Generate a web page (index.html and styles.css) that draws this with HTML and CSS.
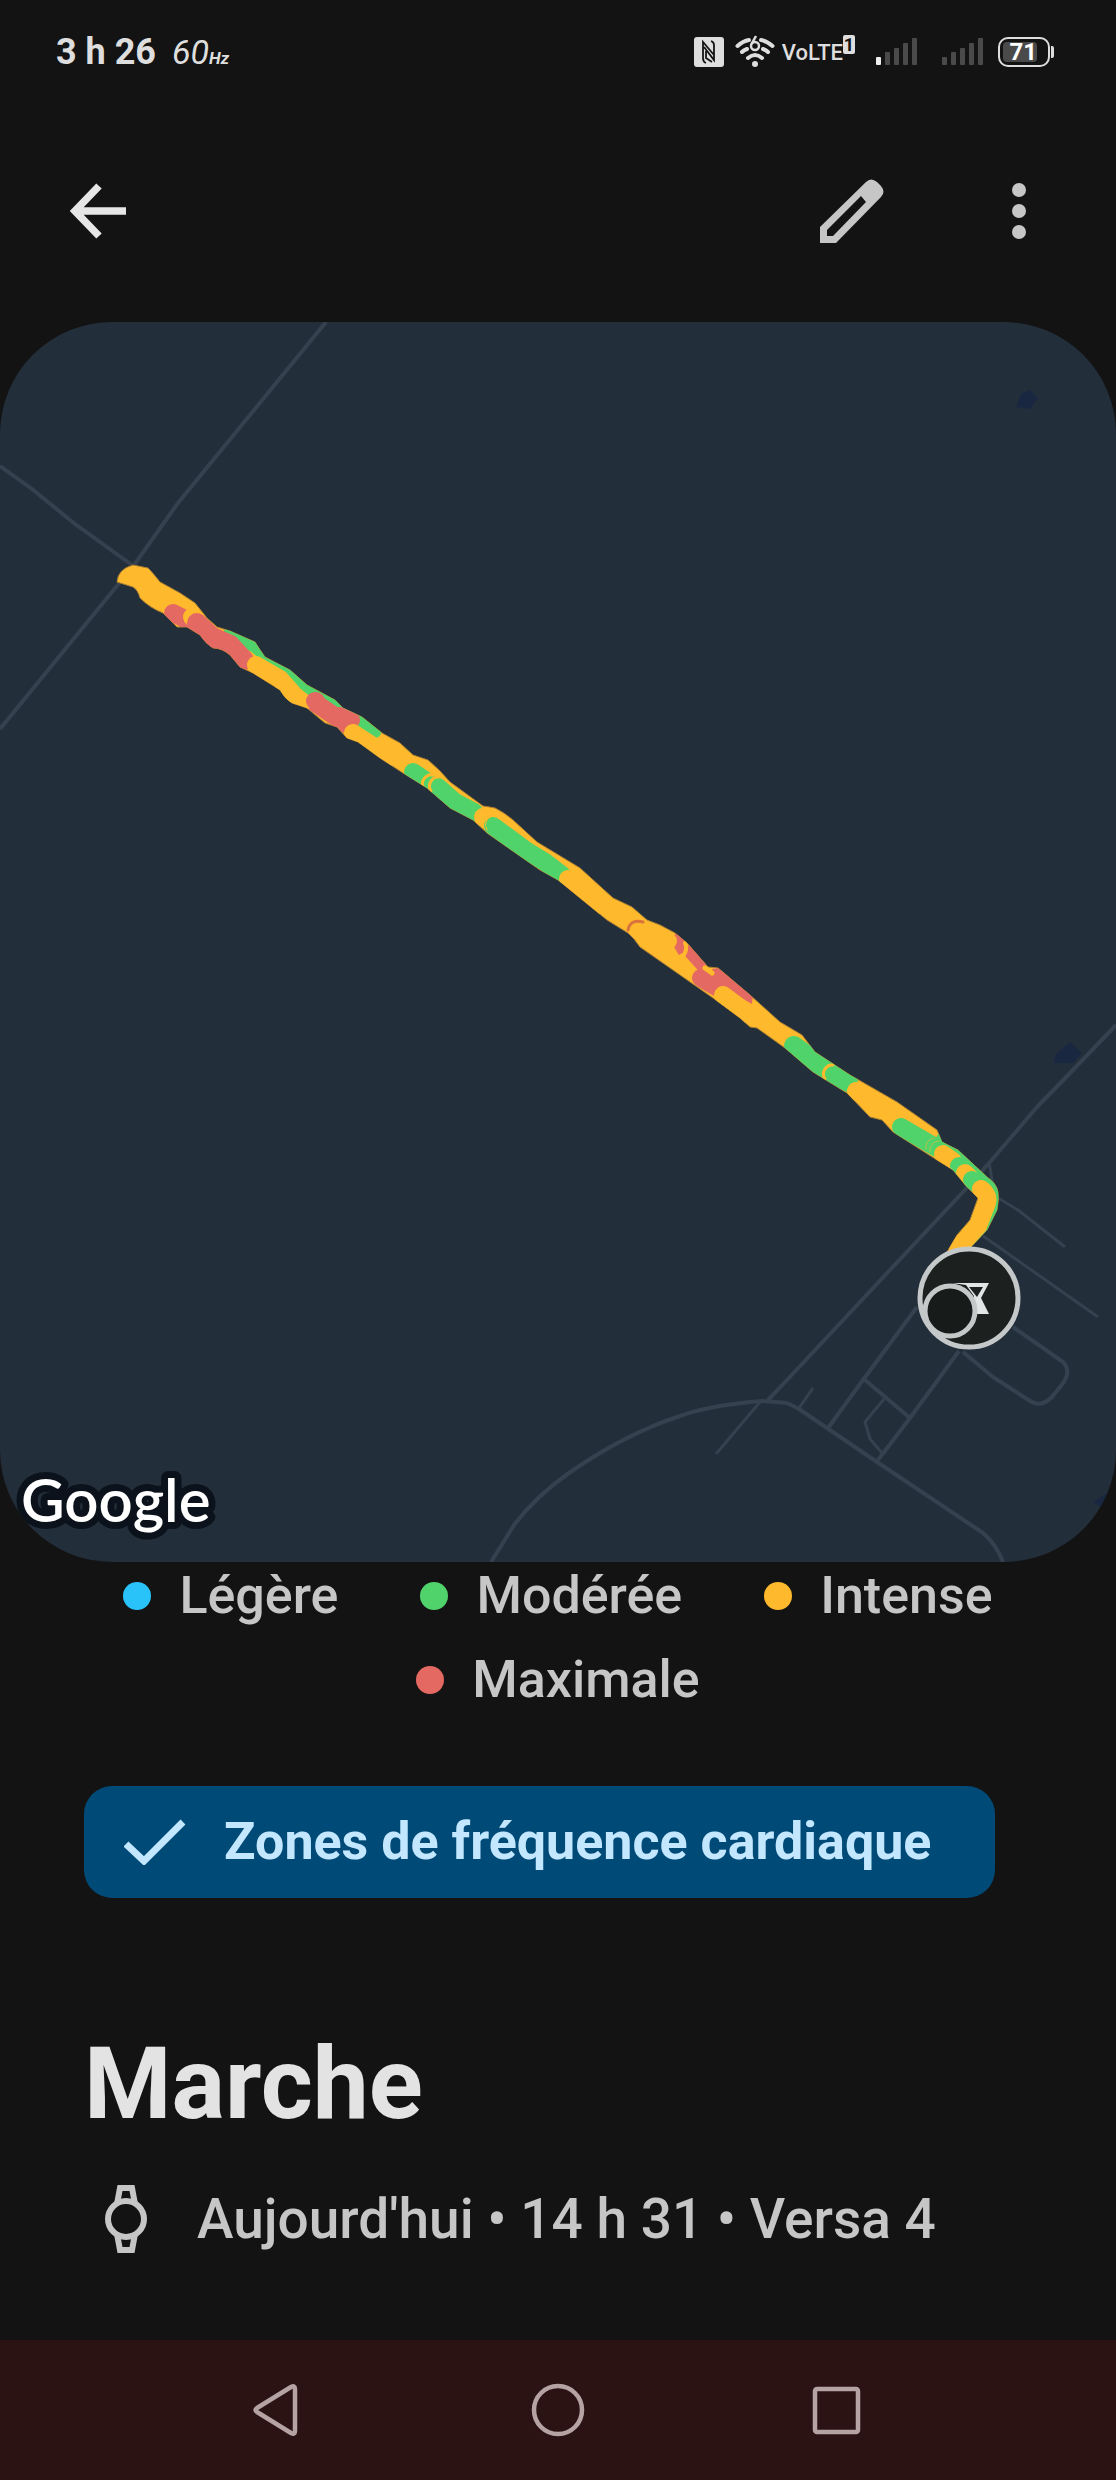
FILE: index.html
```html
<!DOCTYPE html>
<html lang="fr">
<head>
<meta charset="utf-8">
<meta name="viewport" content="width=device-width, initial-scale=1">
<title>Marche</title>
<link rel="stylesheet" href="styles.css">
</head>
<body>
<div class="statusbar">
  <div class="status-left">
    <span class="clock">3 h 26</span>
    <span class="refresh">60<b class="unit">Hz</b></span>
  </div>
  <div class="status-right">
    <svg class="nfc" width="30" height="30" viewBox="0 0 30 30" role="img" aria-label="NFC">
      <rect x="0" y="0" width="30" height="30" rx="3" fill="#dedede"/>
      <path d="M12 26Q9 25 9 21V5L20 18M10 10 20 23V8Q20 5 17 4M12 14V21L18 25" fill="none" stroke="#131313" stroke-width="1.800"/>
    </svg>
    <svg class="wifi" width="40" height="34" viewBox="0 0 40 34" role="img" aria-label="Wi-Fi 6">
      <g fill="none" stroke="#dedede" stroke-width="4" stroke-linecap="round">
        <path d="M2.500 11Q8 6 14 5M26 5Q32 6 37.500 11"/>
        <path d="M7 17Q9 15 12 14M28 14Q31 15 33 17"/>
        <path d="M13 23Q20 17 27 23"/>
      </g>
      <circle cx="20" cy="29" r="3" fill="#dedede"/>
      <circle cx="20" cy="11" r="4" fill="none" stroke="#dedede" stroke-width="2.500"/>
      <path d="M16.500 9 21 1" stroke="#dedede" stroke-width="2.500"/>
    </svg>
    <span class="volte">VoLTE</span><span class="sim">1</span>
    <svg class="signal first" width="42" height="28" viewBox="0 0 42 28" role="img" aria-label="Signal SIM 1">
      <rect x="0" y="19" width="5" height="8" rx="1" fill="#eee"/>
      <g fill="#4a4a4a"><rect x="9" y="14" width="5" height="13" rx="1"/><rect x="18" y="10" width="5" height="17" rx="1"/><rect x="27" y="5" width="5" height="22" rx="1"/><rect x="36" y="0" width="5" height="27" rx="1"/></g>
    </svg>
    <svg class="signal" width="42" height="28" viewBox="0 0 42 28" role="img" aria-label="Signal SIM 2">
      <g fill="#4a4a4a"><rect x="0" y="19" width="5" height="8" rx="1"/><rect x="9" y="14" width="5" height="13" rx="1"/><rect x="18" y="10" width="5" height="17" rx="1"/><rect x="27" y="5" width="5" height="22" rx="1"/><rect x="36" y="0" width="5" height="27" rx="1"/></g>
    </svg>
    <span class="battery"><span class="level">71</span></span>
  </div>
</div>

<header class="appbar">
  <button class="icon-btn" type="button" aria-label="Retour">
    <svg width="56" height="56" viewBox="0 0 56 56"><path d="M56 28H6M29 3 5 28l24 25" fill="none" stroke="#e6e6e6" stroke-width="7.500"/></svg>
  </button>
  <div class="actions">
    <button class="icon-btn" type="button" aria-label="Modifier">
      <svg width="64" height="64" viewBox="0 0 64 64"><path fill="#c6c6c6" fill-rule="evenodd" d="M0 64V48L46 3Q51-2 57 3L61 7Q66 13 61 18L16 64ZM7 57H13L46 23 41 17 7 51Z"/></svg>
    </button>
    <button class="icon-btn" type="button" aria-label="Plus d'options">
      <svg width="14" height="56" viewBox="0 0 14 56"><g fill="#c6c6c6"><circle cx="7" cy="7" r="7"/><circle cx="7" cy="28" r="7"/><circle cx="7" cy="49" r="7"/></g></svg>
    </button>
  </div>
</header>

<main>
  <svg class="map" viewBox="0 322 1116 1240" role="img" aria-label="Carte du parcours">
    <defs>
      <clipPath id="track"><path id="trackShape" d="M133 565 148 568Q153 573 160 582L180 593 195 603 207 618 217 627 230 631 255 642Q260 650 265 657L290 670 307 685 335 700 343 708 362 717 382 733 400 743 413 755 428 760Q440 770 450 782L483 806Q490 807 495 808 505 813 513 820L537 842 580 868 613 898 632 907 647 920 660 925 675 933 687 943 708 967 718 968 750 995 780 1022 802 1035 815 1052 850 1075 897 1102 937 1130 942 1142 958 1150 987 1177Q997 1184 998 1192 999 1201 997 1210L987 1230 970 1248 965 1260 942 1260 950 1247 957 1235 970 1220 978 1198 967 1187 953 1170 937 1160 893 1132 882 1120 870 1117 847 1093 813 1072 785 1048 757 1028 750 1027 740 1018 713 998 640 947 634 939 628 933 607 920 558 880 540 870 507 847 487 833 473 820 450 808 427 788 403 773 380 758 358 742 347 738 337 727 325 723 307 708 292 703Q285 699 280 690L253 673 240 667 230 655Q222 648 213 648 206 644 200 635L187 627H177L163 613Q150 608 140 598 138 590 133 587L117 582Q118 569 133 565Z"/></clipPath>
    </defs>
    <rect y="322" width="1116" height="1240" fill="#232e3b"/>
    <g fill="#1a2740">
      <path d="M1016 407 1021 394 1030 390 1038 398 1030 409Z"/>
      <path d="M1054 1063 1055 1055 1070 1042 1082 1053 1073 1063Z"/>
      <path d="M1093 1502 1112 1490 1108 1512Z"/>
    </g>
    <g fill="none" stroke="#36414f" stroke-width="4" stroke-linejoin="round">
      <path d="M326 322 178 503 134 565 0 729M0 466 32 489 75 524 132 565"/>
      <path d="M1116 1025 1073 1070 1037 1107 990 1162 963 1192 787 1380 768 1400"/>
      <path d="M989 1162 992 1180 998 1198 1018 1210 1065 1247M983 1236 1098 1317" stroke-width="3"/>
      <path d="M1013 1327 1063 1362Q1071 1370 1064 1382L1052 1397Q1041 1408 1030 1401L993 1377 963 1352"/>
      <path d="M917 1307 863 1380 828 1428M959 1351 910 1418 878 1460M865 1380 910 1418"/>
      <path d="M884 1399 865 1422 870 1439 882 1453M813 1388 799 1408M716 1454 760 1402" stroke-width="3"/>
      <path d="M491 1562 514 1525Q536 1496 569 1473 625 1434 680 1416 710 1405 763 1401L787 1403 799 1409 877 1462 983 1533Q996 1544 1003 1562"/>
    </g>
    <use href="#trackShape" fill="#ffb92c" stroke="#a97f33" stroke-width="1"/>
    <g clip-path="url(#track)" fill="none" stroke-width="18" stroke-linecap="round" stroke-linejoin="round">
      <path d="M230 635 255 645 290 675 330 703 350 715 374 731" stroke="#51d36b" stroke-width="15"/>
      <path d="M945 1140 985 1175 998 1195 994 1220 972 1250" stroke="#51d36b"/>
      <g stroke="#e46962">
        <path d="M173 613 187 620"/>
        <path d="M192 617 196 620" stroke="#ffb92c"/>
        <path d="M197 623 212 637 230 645 244 660" stroke-width="20"/>
        <path d="M314 702 333 715 348 725"/>
        <path d="M340 716 351 720"/>
      </g>
      <g stroke="#ffb92c">
        <path d="M256 665 280 679 294 695 303 702"/>
        <path d="M315 701H316" stroke="#e46962"/>
        <path d="M353 733 390 757"/>
      </g>
      <g stroke="#51d36b">
        <path d="M413 772 432 785"/>
        <path d="M438 787 455 802 474 812"/>
      </g>
      <path d="M431 791A9 9 0 0 1 438 777M423 787A9 9 0 0 1 433 775" stroke="#ffb92c" stroke-width="3"/>
      <path d="M483 817 490 822" stroke="#ffb92c"/>
      <path d="M493 826 527 851 545 862 562 875" stroke="#51d36b"/>
      <path d="M487 830A9 9 0 0 1 494 816" stroke="#ffb92c" stroke-width="1"/>
      <path d="M568 879 600 905" stroke="#ffb92c"/>
      <path d="M628 930Q630 919 643 922" stroke="#d9733c" stroke-width="3"/>
      <path d="M674 935 684 952" stroke="#e46962" stroke-width="12" stroke-linecap="butt"/>
      <path d="M686 948 704 968" stroke="#e46962" stroke-width="12" stroke-linecap="butt"/>
      <path d="M667 939 669 941" stroke="#ffb92c" stroke-width="16"/>
      <path d="M685 943Q688 950 683 956" stroke="#ffb92c" stroke-width="4"/>
      <path d="M701 978 725 992" stroke="#e46962"/>
      <path d="M712 969 719 968 753 994 752 1004 725 989 715 980Z" fill="#e46962" stroke="none"/>
      <path d="M705 968 712 973" stroke="#ffb92c" stroke-width="5"/>
      <path d="M723 995 750 1015" stroke="#ffb92c"/>
      <path d="M794 1046 820 1065 848 1082" stroke="#51d36b" stroke-width="20"/>
      <path d="M825 1079A9 9 0 0 1 833 1065" stroke="#ffb92c" stroke-width="3"/>
      <path d="M856 1091 880 1105" stroke="#ffb92c"/>
      <path d="M901 1127 937 1148" stroke="#51d36b"/>
      <path d="M926 1149A9 9 0 0 1 934 1138M930 1152A9 9 0 0 1 939 1141" stroke="#b9c04a" stroke-width="1"/>
      <path d="M943 1154 953 1161" stroke="#ffb92c"/>
      <path d="M959 1166 964 1171" stroke="#51d36b"/>
      <path d="M965 1173 970 1178" stroke="#ffb92c"/>
      <path d="M972 1180 980 1186" stroke="#51d36b"/>
      <path d="M981 1189Q989 1195 987 1203L978 1226 958 1248" stroke="#ffb92c"/>
    </g>
    <g fill="#1c211f" stroke="#c4c8c9" stroke-width="5">
      <circle cx="969" cy="1298" r="49"/>
      <path d="M952 1283H989L981 1298 989 1314H974V1296L966 1285Z" fill="#e2e5e6" stroke="none"/>
      <path d="M969 1287H983L977 1297Z" stroke="none"/>
      <circle cx="950" cy="1311" r="25" fill="#171b19"/>
    </g>
    <text class="brand" x="21" y="1522">Google</text>
  </svg>

  <ul class="legend">
    <li><span class="dot light"></span>Légère</li>
    <li><span class="dot moderate"></span>Modérée</li>
    <li><span class="dot intense"></span>Intense</li>
    <li><span class="dot peak"></span>Maximale</li>
  </ul>

  <section class="details">
    <button class="chip" type="button" aria-pressed="true">
      <svg width="62" height="46" viewBox="0 0 62 46"><path d="M2 25 20 42 59 3" fill="none" stroke="#c2e7ff" stroke-width="7"/></svg>
      Zones de fréquence cardiaque
    </button>
    <h1>Marche</h1>
    <p class="meta">
      <svg width="42" height="68" viewBox="0 0 42 68"><g fill="none" stroke="#c6c6c6" stroke-width="6"><circle cx="21" cy="34" r="18"/><path d="M12 19 15 3H27L30 19M12 49 15 65H27L30 49"/></g></svg>
      <span>Aujourd'hui • 14 h 31 • Versa 4</span>
    </p>
  </section>
</main>

<nav class="navbar" aria-label="Système">
  <button class="icon-btn" type="button" aria-label="Précédent">
    <svg width="54" height="54" viewBox="0 0 54 54"><path d="M38 4Q42 2 42 6V48Q42 52 38 50L4 29Q1 27 4 25Z" fill="none" stroke="#b5a3a3" stroke-width="4.500" stroke-linejoin="round"/></svg>
  </button>
  <button class="icon-btn" type="button" aria-label="Accueil">
    <svg width="54" height="54" viewBox="0 0 54 54"><circle cx="27" cy="27" r="24" fill="none" stroke="#b5a3a3" stroke-width="4.500"/></svg>
  </button>
  <button class="icon-btn" type="button" aria-label="Applications récentes">
    <svg width="54" height="54" viewBox="0 0 54 54"><rect x="6" y="6" width="43" height="43" rx="2" fill="none" stroke="#b5a3a3" stroke-width="4.500"/></svg>
  </button>
</nav>
</body>
</html>
```
FILE: styles.css
```css
* {
  box-sizing: border-box;
}

body {
  margin: 0;
  min-height: 100vh;
  display: flex;
  flex-direction: column;
  background: #131313;
  color: #c6c6c6;
  font-family: Roboto, "Liberation Sans", sans-serif;
}

svg {
  display: block;
  flex: none;
}

.icon-btn {
  display: block;
  padding: 0;
  border: 0;
  background: none;
  cursor: pointer;
}

/* Status bar */
.statusbar {
  height: 100px;
  padding: 4px 62px 0 56px;
  display: flex;
  justify-content: space-between;
  align-items: center;
  color: #dedede;
}

.status-left {
  display: flex;
  align-items: baseline;
  gap: 16px;
}

.clock {
  font-size: 36px;
  font-weight: 700;
}

.refresh {
  font-size: 34px;
  font-style: italic;
}

.unit {
  font-size: 17px;
}

.status-right {
  display: flex;
  align-items: center;
}

.wifi {
  margin: 0 7px 0 11px;
}

.volte {
  font-size: 22px;
  font-weight: 500;
}

.sim {
  align-self: flex-start;
  width: 12px;
  border-radius: 2px;
  background: #dedede;
  color: #131313;
  font-size: 18px;
  font-weight: 700;
  line-height: 19px;
  text-align: center;
}

.signal {
  margin-right: 14px;
}

.first {
  margin: 0 24px 0 21px;
}

.battery {
  position: relative;
  width: 52px;
  height: 30px;
  margin-right: 4px;
  padding: 3px;
  border: 2px solid #dedede;
  border-radius: 10px;
}

.battery::after {
  content: "";
  position: absolute;
  top: 7px;
  right: -6px;
  width: 3px;
  height: 12px;
  border-radius: 0 2px 2px 0;
  background: #dedede;
}

.level {
  display: block;
  width: 34px;
  height: 20px;
  border-radius: 4px;
  background: #4a4a4a;
  color: #fff;
  font-size: 24px;
  font-weight: 700;
  line-height: 20px;
  text-align: right;
}

/* App bar */
.appbar {
  height: 222px;
  padding: 0 90px 0 70px;
  display: flex;
  justify-content: space-between;
  align-items: center;
}

.actions {
  display: flex;
  align-items: center;
  gap: 128px;
}

/* Map */
.map {
  width: 100%;
  height: auto;
  border-radius: 112px;
}

.brand {
  font-family: Lato, sans-serif;
  font-size: 60px;
  font-weight: 600;
  fill: #fff;
  stroke: #0b121b;
  stroke-width: 14px;
  stroke-linejoin: round;
  paint-order: stroke;
}

/* Legend */
.legend {
  margin: 0;
  padding: 4px 84px 0;
  display: flex;
  flex-wrap: wrap;
  justify-content: center;
  gap: 24px 82px;
  list-style: none;
  font-size: 52px;
  font-weight: 500;
  line-height: 60px;
}

.legend li {
  display: flex;
  align-items: center;
  gap: 28px;
}

.dot {
  width: 28px;
  height: 28px;
  border-radius: 50%;
}

.light { background: #29c3fa; }
.moderate { background: #51d36b; }
.intense { background: #ffb92c; }
.peak { background: #e46962; }

/* Details */
.details {
  padding: 76px 84px 0;
}

.chip {
  display: flex;
  align-items: center;
  gap: 38px;
  height: 112px;
  padding: 0 64px 0 40px;
  border: 0;
  border-radius: 28px;
  background: #004a77;
  color: #c2e7ff;
  font: 700 52px/60px Roboto, "Liberation Sans", sans-serif;
  white-space: nowrap;
  cursor: pointer;
}

h1 {
  margin: 126px 0 0;
  color: #e3e3e3;
  font-size: 100px;
  font-weight: 700;
  line-height: 120px;
}

.meta {
  margin: 40px 0 0;
  padding-left: 21px;
  display: flex;
  align-items: center;
  gap: 50px;
  font-size: 55px;
  font-weight: 500;
  line-height: 70px;
}

/* System navigation */
.navbar {
  height: 140px;
  margin-top: auto;
  display: flex;
  justify-content: center;
  align-items: center;
  gap: 224px;
  background: #2b1313;
}
```
